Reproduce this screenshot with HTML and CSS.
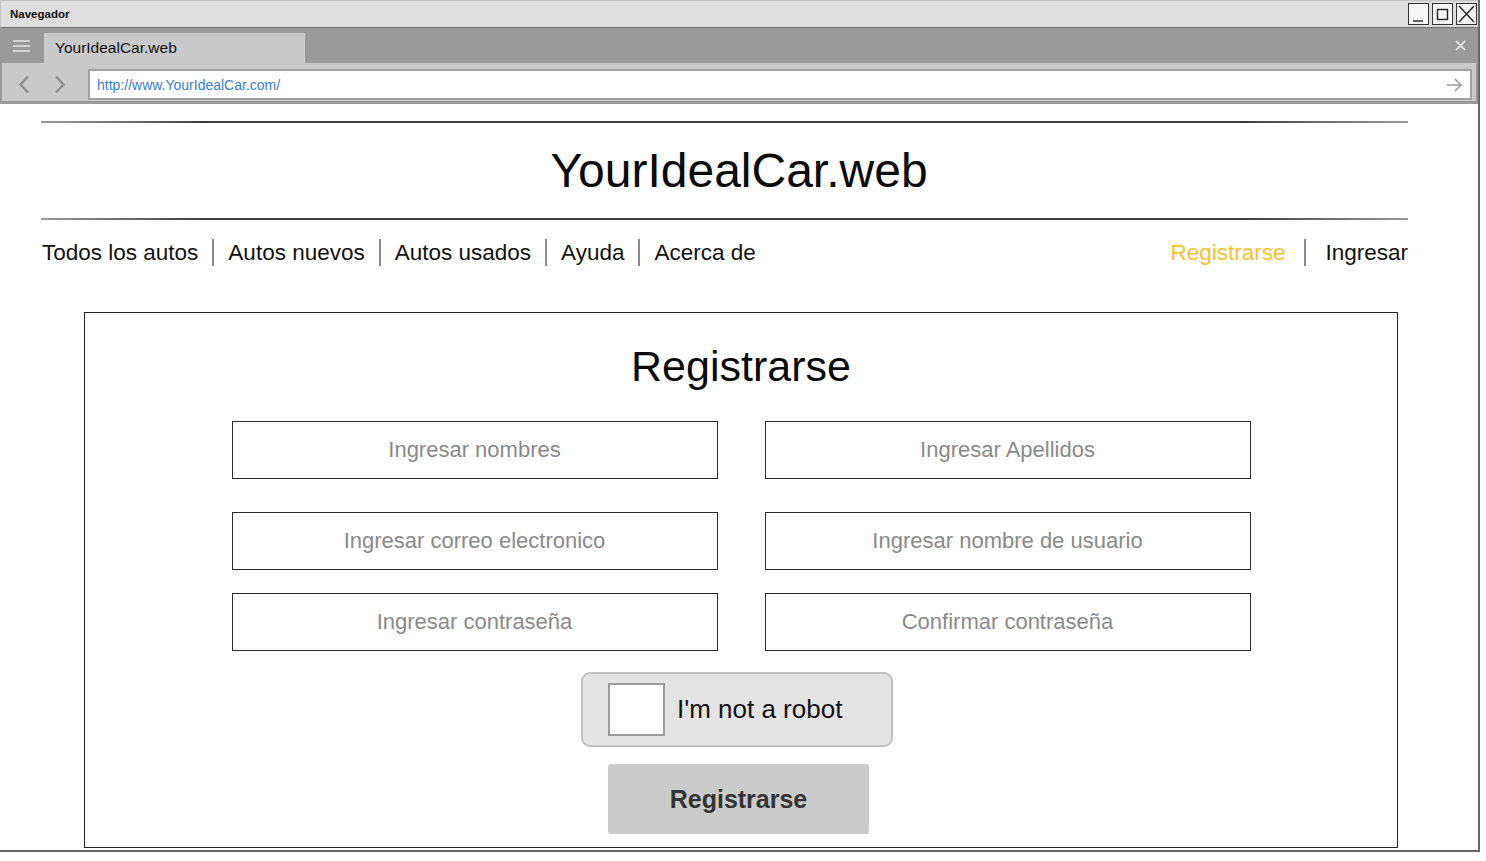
FILE: index.html
```html
<!DOCTYPE html>
<html lang="es">
<head>
<meta charset="utf-8">
<title>YourIdealCar.web</title>
<link rel="stylesheet" href="styles.css">
</head>
<body>
<div class="window">
  <div class="titlebar">
    <span class="win-title">Navegador</span>
    <div class="win-btns">
      <span class="wbtn"><svg width="19" height="20" viewBox="0 0 19 20"><line x1="4" y1="17" x2="14" y2="17" stroke="#222" stroke-width="1.4"/></svg></span>
      <span class="wbtn"><svg width="19" height="20" viewBox="0 0 19 20"><rect x="4.5" y="5.5" width="10" height="10" fill="none" stroke="#222" stroke-width="1.4"/></svg></span>
      <span class="wbtn"><svg width="19" height="20" viewBox="0 0 19 20"><path d="M2 2 L17 18 M17 2 L2 18" stroke="#222" stroke-width="1.4" fill="none"/></svg></span>
    </div>
  </div>
  <div class="tabbar">
    <span class="menu-icon"><svg width="17" height="12" viewBox="0 0 17 12"><path d="M0 1 H17 M0 6 H17 M0 11 H17" stroke="#d2d2d2" stroke-width="2" fill="none"/></svg></span>
    <div class="tab">YourIdealCar.web</div>
    <span class="tab-close"><svg width="11" height="11" viewBox="0 0 11 11"><path d="M1 1 L10 10 M10 1 L1 10" stroke="#f2f2f2" stroke-width="1.6" fill="none"/></svg></span>
  </div>
  <div class="addressbar">
    <span class="nav-arrow"><svg width="12" height="19" viewBox="0 0 12 19"><polyline points="10,1.5 2.5,9.5 10,17.5" fill="none" stroke="#8e8e8e" stroke-width="2.4"/></svg></span>
    <span class="nav-arrow"><svg width="12" height="19" viewBox="0 0 12 19"><polyline points="2,1.5 9.5,9.5 2,17.5" fill="none" stroke="#8e8e8e" stroke-width="2.4"/></svg></span>
    <div class="url">
      <span class="url-text">http://www.YourIdealCar.com/</span>
      <svg class="go" width="16" height="14" viewBox="0 0 16 14"><path d="M1 7 H15 M9 1 L15 7 L9 13" fill="none" stroke="#9a9a9a" stroke-width="1.5"/></svg>
    </div>
  </div>
  <div class="page">
    <div class="rule rule-top"></div>
    <h1 class="logo">YourIdealCar.web</h1>
    <div class="rule rule-bottom"></div>
    <nav class="menu-bar">
      <a class="link">Todos los autos</a>
      <span class="sep"></span>
      <a class="link">Autos nuevos</a>
      <span class="sep"></span>
      <a class="link">Autos usados</a>
      <span class="sep"></span>
      <a class="link">Ayuda</a>
      <span class="sep"></span>
      <a class="link">Acerca de</a>
      <a class="link link-active push">Registrarse</a>
      <span class="sep sep-wide"></span>
      <a class="link">Ingresar</a>
    </nav>
    <section class="signup">
      <h2 class="signup-title">Registrarse</h2>
      <div class="field-row row-1">
        <input class="field" type="text" placeholder="Ingresar nombres">
        <input class="field" type="text" placeholder="Ingresar Apellidos">
      </div>
      <div class="field-row row-2">
        <input class="field" type="text" placeholder="Ingresar correo electronico">
        <input class="field" type="text" placeholder="Ingresar nombre de usuario">
      </div>
      <div class="field-row row-3">
        <input class="field" type="password" placeholder="Ingresar contraseña">
        <input class="field" type="password" placeholder="Confirmar contraseña">
      </div>
      <div class="captcha">
        <span class="checkbox"></span>
        <span class="captcha-text">I'm not a robot</span>
      </div>
      <button class="submit" type="button">Registrarse</button>
    </section>
  </div>
</div>
</body>
</html>
```

FILE: styles.css
```css
* { box-sizing: border-box; }

body {
  margin: 0;
  background: #ffffff;
  font-family: "Liberation Sans", Arial, sans-serif;
  color: #111;
}

.window {
  width: 1480px;
  height: 852px;
  border-right: 2px solid #666;
  border-bottom: 2px solid #666;
  display: flex;
  flex-direction: column;
  overflow: hidden;
}

/* title bar */
.titlebar {
  height: 28px;
  flex: none;
  background: #dedede;
  border-top: 1px solid #c4c4c4;
  border-left: 1px solid #c4c4c4;
  border-bottom: 1px solid #6e6e6e;
  display: flex;
  align-items: center;
  justify-content: space-between;
  padding-left: 9px;
}

.win-title {
  font-size: 11.5px;
  font-weight: bold;
  color: #111;
}

.win-btns {
  display: flex;
  gap: 3px;
  padding-right: 1px;
}

.wbtn {
  width: 21px;
  height: 22px;
  border: 1px solid #333;
  background: #f6f6f6;
  display: flex;
}

/* tab bar */
.tabbar {
  height: 35px;
  flex: none;
  background: #9a9a9a;
  display: flex;
  align-items: flex-end;
}

.menu-icon {
  width: 44px;
  align-self: center;
  display: flex;
  justify-content: center;
  padding-right: 1px;
}

.tab {
  width: 261px;
  height: 30px;
  background: #c9c9c9;
  padding-left: 11px;
  font-size: 15.5px;
  line-height: 30px;
  color: #111;
}

.tab-close {
  margin-left: auto;
  margin-right: 12px;
  align-self: center;
  display: flex;
}

/* address bar */
.addressbar {
  height: 41px;
  flex: none;
  background: #c9c9c9;
  border-left: 2px solid #9a9a9a;
  border-right: 2px solid #9a9a9a;
  border-bottom: 3px solid #9a9a9a;
  display: flex;
  align-items: flex-start;
  padding-top: 6px;
  padding-left: 4px;
}

.nav-arrow {
  width: 36px;
  height: 31px;
  display: flex;
  align-items: center;
  justify-content: center;
}

.url {
  flex: 1;
  height: 31px;
  margin-left: 10px;
  margin-right: 4px;
  background: #fff;
  border: 2px solid #a2a2a2;
  display: flex;
  align-items: center;
  padding-left: 7px;
  padding-right: 8px;
}

.url-text {
  font-size: 14px;
  color: #3a7dd3;
}

.go { margin-left: auto; }

/* page */
.page {
  flex: 1;
  display: flex;
  flex-direction: column;
}

.rule {
  margin-left: 41px;
  width: 1367px;
  height: 2px;
  background: linear-gradient(to right, #8a8a8a, #1c1c1c 12%, #1c1c1c 88%, #8a8a8a);
  opacity: 0.85;
}

.rule-top { margin-top: 17px; }

.logo {
  margin: 21px 0 0;
  font-size: 48px;
  font-weight: normal;
  line-height: 54px;
  text-align: center;
  color: #0a0a0a;
}

.rule-bottom { margin-top: 20px; }

.menu-bar {
  margin-top: 19px;
  margin-left: 42px;
  width: 1366px;
  display: flex;
  align-items: center;
  font-size: 22.5px;
  line-height: 27px;
}

.link {
  color: #111;
  white-space: nowrap;
}

.link-active { color: #f8c22e; }

.push { margin-left: auto; }

.sep {
  width: 2px;
  height: 27px;
  background: #8a8a8a;
  margin: 0 14px;
}

.sep-wide { margin: 0 19px; }

/* signup card */
.signup {
  margin-top: 46px;
  margin-left: 84px;
  width: 1314px;
  height: 536px;
  border: 1px solid #222;
  display: flex;
  flex-direction: column;
  align-items: center;
}

.signup-title {
  margin: 28px 0 0;
  font-size: 43px;
  font-weight: normal;
  line-height: 50px;
  color: #0a0a0a;
}

.field-row {
  display: flex;
  gap: 47px;
}

.row-1 { margin-top: 30px; }
.row-2 { margin-top: 33px; }
.row-3 { margin-top: 23px; }

.field {
  width: 486px;
  height: 58px;
  border: 1px solid #2a2a2a;
  background: #fff;
  text-align: center;
  font-family: "Liberation Sans", Arial, sans-serif;
  font-size: 22px;
  color: #333;
  padding: 0;
  outline: none;
}

.field::placeholder { color: #8a8a8a; }

.captcha {
  margin-top: 21px;
  margin-right: 8px;
  width: 312px;
  height: 75px;
  background: #e4e4e4;
  border: 2px solid #c2c2c2;
  border-radius: 9px;
  display: flex;
  align-items: center;
  padding-left: 25px;
}

.checkbox {
  width: 57px;
  height: 53px;
  background: #fff;
  border: 2px solid #9c9c9c;
  margin-right: 12px;
}

.captcha-text {
  font-size: 26px;
  color: #111;
}

.submit {
  margin-top: 17px;
  margin-right: 5px;
  width: 261px;
  height: 70px;
  background: #cbcbcb;
  border: none;
  border-radius: 3px;
  font-family: "Liberation Sans", Arial, sans-serif;
  font-weight: bold;
  font-size: 25px;
  color: #333;
  padding: 0;
}
```
